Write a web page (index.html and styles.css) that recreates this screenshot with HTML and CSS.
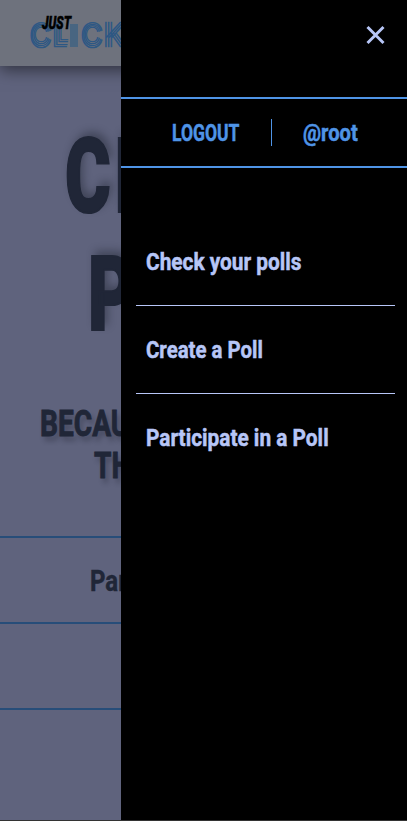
FILE: index.html
```html
<!DOCTYPE html>
<html lang="en">
<head>
<meta charset="utf-8">
<meta name="viewport" content="width=device-width, initial-scale=1">
<title>Just Click</title>
<link rel="stylesheet" href="styles.css">
</head>
<body>
<div class="page">
  <header class="topbar">
    <svg class="logo" width="140" height="66" viewBox="0 0 140 66" role="img" aria-label="Just Click">
      <defs>
        <g id="letter-c">
          <text class="s1" y="12.7">C</text>
          <text class="s2" y="10.9">C</text>
          <text class="s3" y="9.1">C</text>
          <text class="s4" y="7.3">C</text>
        </g>
      </defs>
      <g class="word">
        <use href="#letter-c" class="mid" x="40.7" y="35"/>
        <text class="s1" x="50.5" y="47" textLength="18" lengthAdjust="spacingAndGlyphs">L</text>
        <text class="l2" x="53.2" y="44.6" textLength="15.5" lengthAdjust="spacingAndGlyphs">L</text>
        <text class="l3" x="55.9" y="42.2" textLength="13" lengthAdjust="spacingAndGlyphs">L</text>
        <text class="l4" x="58.6" y="39.8" textLength="10.5" lengthAdjust="spacingAndGlyphs">L</text>
        <use href="#letter-c" class="mid" x="92" y="35"/>
        <text class="s1" x="101.5" y="47">K</text>
        <text class="s1" x="104.2" y="47">K</text>
        <text class="s1" x="106.9" y="47">K</text>
      </g>
      <rect class="bar" x="70" y="24" width="8" height="23"/>
      <text class="just" x="42" y="29" textLength="29" lengthAdjust="spacingAndGlyphs">JUST</text>
    </svg>
  </header>
  <main>
    <h1 class="title">
      <span class="line first">CLICK</span>
      <span class="line second">POLL</span>
    </h1>
    <p class="tagline">
      <span class="line one">BECAUSE</span>
      <span class="line two">THE</span>
    </p>
    <div class="row"><span class="row-label">Participate</span></div>
    <div class="row"></div>
    <div class="row"></div>
  </main>
</div>
<aside class="drawer">
  <div class="drawer-top">
    <button class="close" aria-label="Close">
      <svg width="20" height="20" viewBox="0 0 20 20"><path d="M1.5 2 L17.5 18 M17.5 2 L1.5 18"/></svg>
    </button>
  </div>
  <div class="account">
    <a class="logout"><span>LOGOUT</span></a>
    <a class="user"><span>@root</span></a>
  </div>
  <nav class="menu">
    <a class="item check"><span>Check your polls</span></a>
    <a class="item create"><span>Create a Poll</span></a>
    <a class="item join"><span>Participate in a Poll</span></a>
  </nav>
</aside>
</body>
</html>
```
FILE: styles.css
```css
* { box-sizing: border-box; }
html, body { margin: 0; height: 100%; overflow: hidden; }
body {
  background: #333;
  font-family: Roboto, "Liberation Sans", sans-serif;
  font-weight: 700;
}
.page {
  height: 820px;
  overflow: hidden;
  background: #5f637d;
  color: #202637;
}
.topbar {
  position: relative;
  height: 66px;
  background: #6e727d;
  box-shadow: 0 4px 15px rgba(0, 0, 0, .5);
}
.logo { display: block; }
.word { font-family: Inter, sans-serif; font-weight: 100; fill: #2c5784; stroke: #2c5784; stroke-width: .6px; }
.mid { text-anchor: middle; }
.s1 { font-size: 34.5px; }
.s2 { font-size: 30px; }
.s3 { font-size: 25px; }
.s4 { font-size: 20px; }
.l2 { font-size: 30.5px; }
.l3 { font-size: 27px; }
.l4 { font-size: 23.5px; }
.bar { fill: #486581; }
.just { font: italic 900 19px Roboto, sans-serif; fill: #000; stroke: #000; stroke-width: .5px; }

.line { display: block; white-space: nowrap; transform-origin: left center; }
.title {
  margin: 52px 0 0;
  font-size: 104px;
  font-weight: 900;
  line-height: 118px;
  -webkit-text-stroke: 2px #202637;
  text-shadow: 5px -5px 10px rgba(20, 24, 36, .4);
}
.first { margin-left: 65px; transform: scaleX(.67); letter-spacing: 6px; }
.second { margin-left: 88px; transform: scaleX(.68); }
.tagline {
  margin: 49px 0 49px;
  font-size: 37px;
  line-height: 42px;
  -webkit-text-stroke: .9px #202637;
  text-shadow: 4px 5px 6px rgba(20, 24, 36, .3);
}
.one { margin-left: 40px; transform: scaleX(.76); }
.two { margin-left: 94px; transform: scaleX(.76); }
.row {
  display: flex;
  align-items: center;
  height: 86px;
  padding-left: 90px;
  border-top: 2px solid #274d79;
}
.row-label {
  font-size: 30px;
  transform: scaleX(.8);
  transform-origin: left center;
  -webkit-text-stroke: .5px #202637;
}

.drawer {
  position: fixed;
  top: 0;
  right: 0;
  width: 286px;
  height: 820px;
  background: #000;
}
.drawer-top {
  display: flex;
  justify-content: flex-end;
  height: 97px;
  padding: 25px 21px 0 0;
}
.close { width: 20px; height: 20px; padding: 0; border: 0; background: none; }
.close svg { display: block; stroke: #b7c6f7; stroke-width: 3px; fill: none; }
.account {
  display: flex;
  align-items: center;
  height: 71px;
  border: solid #4f94e6;
  border-width: 2px 0;
  color: #4f94e6;
  font-size: 24px;
  line-height: 27px;
}
.account span, .item span {
  display: block;
  transform-origin: left center;
  white-space: nowrap;
  -webkit-text-stroke: .5px currentColor;
}
.account span { position: relative; top: 1px; }
.logout { width: 151px; padding-left: 51px; border-right: 1px solid #4f94e6; }
.logout span { width: 95px; transform: scaleX(.73); }
.user { padding-left: 31px; }
.user span { transform: scaleX(.84); }
.menu { margin: 50px 12px 0 15px; color: #b7c6f7; }
.item {
  display: flex;
  align-items: center;
  height: 88px;
  padding-left: 10px;
  border-bottom: 1px solid #b7c6f7;
  font-size: 24px;
}
.item:last-child { border-bottom-color: transparent; }
.check span { transform: scaleX(.868); }
.create span { transform: scaleX(.85); }
.join span { transform: scaleX(.868); }
```
